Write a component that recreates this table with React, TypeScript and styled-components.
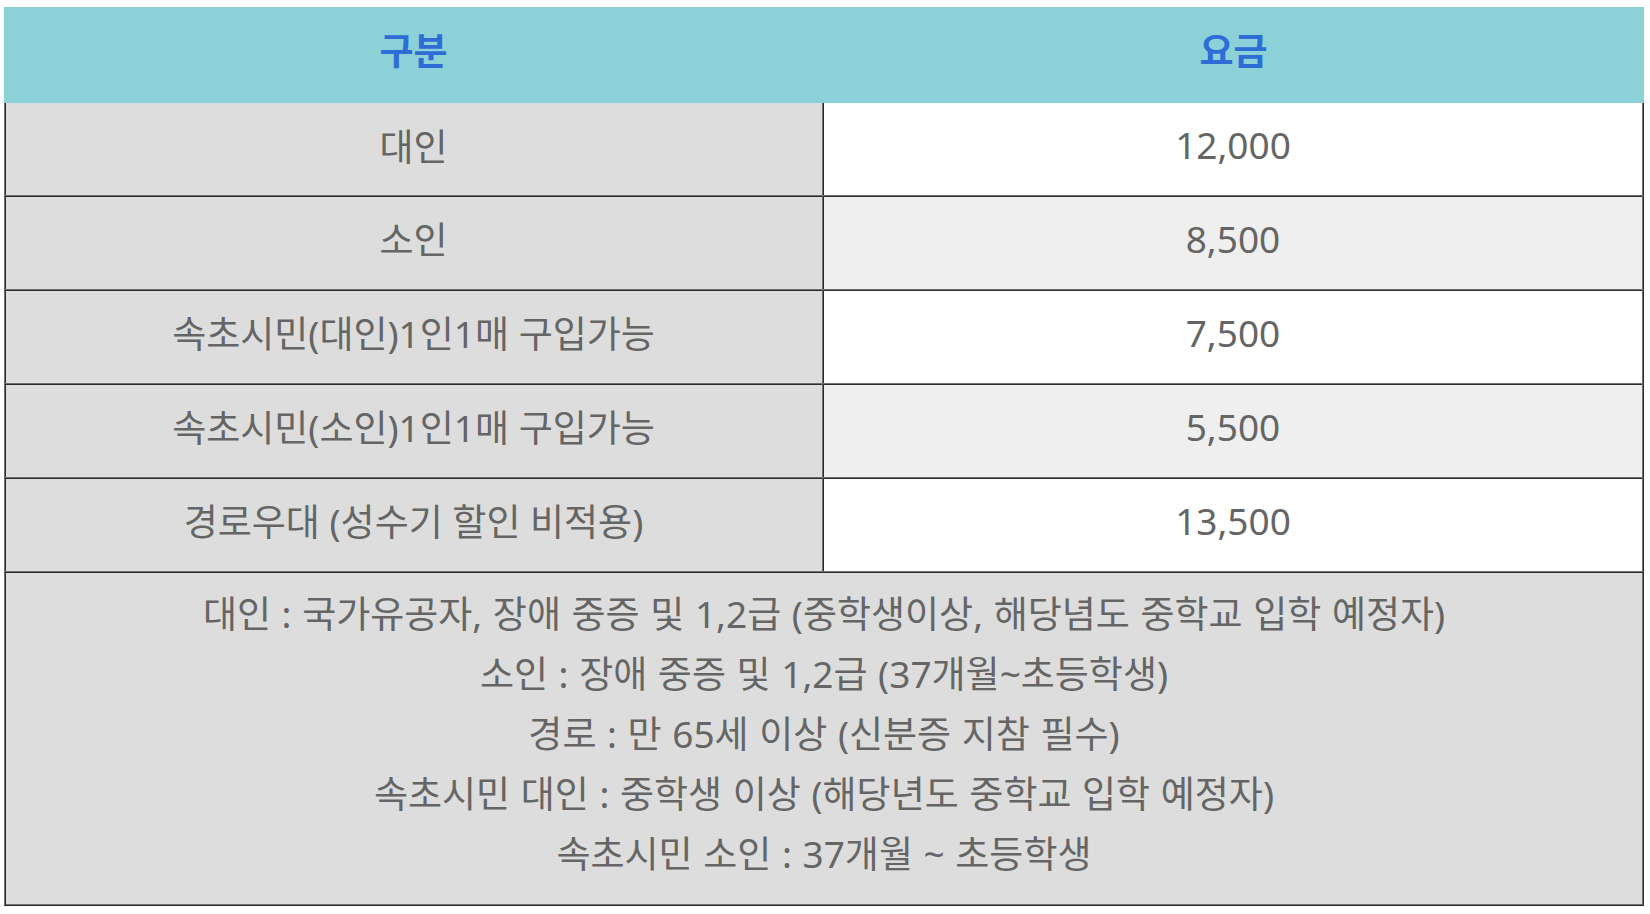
import React from "react";
import styled, { createGlobalStyle } from "styled-components";

const Global = createGlobalStyle`
  html, body { margin: 0; padding: 0; background: #ffffff; }
  body { font-family: "Noto Sans", "Noto Sans CJK KR", sans-serif; }
`;

const LIGHT = "#6f6f6f";
const DARK = "#2c2c2c";

const Table = styled.div`
  width: 1640px;
  margin: 7px 0 0 4px;
  display: flex;
  flex-direction: column;
  color: #656565;
  font-size: 37px;
`;

const HeadRow = styled.div`
  display: grid;
  grid-template-columns: 819px 821px;
  height: 96px;
  background: #8bd1d7;
`;

const HeadCell = styled.div`
  display: flex;
  align-items: center;
  justify-content: center;
  color: #2f6dd6;
  font-weight: 700;
  padding-bottom: 13px;
  box-sizing: border-box;
`;

const Row = styled.div<{ $first?: boolean }>`
  display: grid;
  grid-template-columns: 819px 821px;
  height: ${(p) => (p.$first ? 92 : 94)}px;
`;

const Cell = styled.div<{ $first?: boolean; $bg: string; $side: "left" | "right" }>`
  box-sizing: border-box;
  display: flex;
  align-items: center;
  justify-content: center;
  padding-bottom: 9px;
  white-space: nowrap;
  background: ${(p) => p.$bg};
  border-top: ${(p) => (p.$first ? "none" : `1px solid ${LIGHT}`)};
  ${(p) =>
    p.$side === "left"
      ? `border-left: 1px solid ${LIGHT}; border-right: 1px solid ${LIGHT};
         box-shadow: inset 1px 0 0 ${DARK}${p.$first ? "" : `, inset 0 1px 0 ${DARK}`};`
      : `border-right: 1px solid ${DARK};
         box-shadow: inset 1px 0 0 ${DARK}, inset -1px 0 0 ${LIGHT}${p.$first ? "" : `, inset 0 1px 0 ${DARK}`};`}
`;

const Footer = styled.div`
  box-sizing: border-box;
  height: 335px;
  background: #dcdddc;
  border-top: 1px solid ${LIGHT};
  border-left: 1px solid ${LIGHT};
  border-right: 1px solid ${DARK};
  border-bottom: 1px solid ${DARK};
  box-shadow: inset 0 1px 0 ${DARK}, inset 1px 0 0 ${DARK}, inset -1px 0 0 ${LIGHT}, inset 0 -1px 0 ${LIGHT};
  padding: 10px 0 20px;
  display: flex;
  flex-direction: column;
  align-items: center;
  justify-content: center;
`;

const Note = styled.div`
  line-height: 60px;
  white-space: nowrap;
  word-spacing: 1px;
`;

const rows: [string, string][] = [
  ["대인", "12,000"],
  ["소인", "8,500"],
  ["속초시민(대인)1인1매 구입가능", "7,500"],
  ["속초시민(소인)1인1매 구입가능", "5,500"],
  ["경로우대 (성수기 할인 비적용)", "13,500"],
];

const notes = [
  "대인 : 국가유공자, 장애 중증 및 1,2급 (중학생이상, 해당념도 중학교 입학 예정자)",
  "소인 : 장애 중증 및 1,2급 (37개월~초등학생)",
  "경로 : 만 65세 이상 (신분증 지참 필수)",
  "속초시민 대인 : 중학생 이상 (해당년도 중학교 입학 예정자)",
  "속초시민 소인 : 37개월 ~ 초등학생",
];

export default function App() {
  return (
    <>
      <Global />
      <Table>
        <HeadRow>
          <HeadCell>구분</HeadCell>
          <HeadCell>요금</HeadCell>
        </HeadRow>
        {rows.map(([label, price], i) => (
          <Row key={label} $first={i === 0}>
            <Cell $first={i === 0} $side="left" $bg="#dcdddc">
              {label}
            </Cell>
            <Cell $first={i === 0} $side="right" $bg={i % 2 === 1 ? "#efefef" : "#ffffff"}>
              {price}
            </Cell>
          </Row>
        ))}
        <Footer>
          {notes.map((n) => (
            <Note key={n}>{n}</Note>
          ))}
        </Footer>
      </Table>
    </>
  );
}
